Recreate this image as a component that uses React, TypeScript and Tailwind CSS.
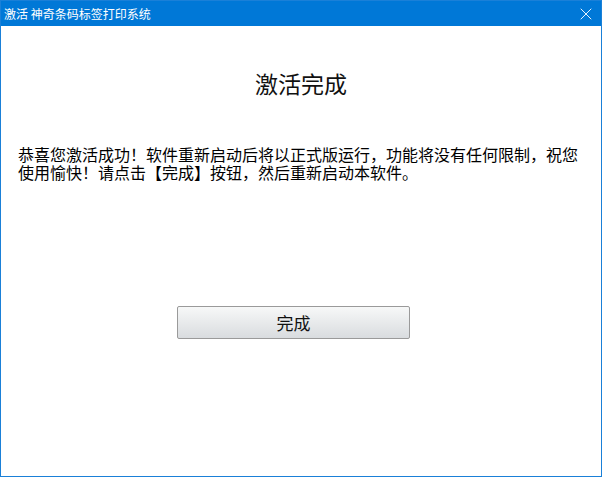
import { X } from "lucide-react";

export default function App() {
  return (
    <div
      className="w-[602px] h-[477px] bg-white border border-[#1a80d8] flex flex-col text-black"
      style={{ fontFamily: '"Noto Sans CJK SC", "Noto Sans", sans-serif' }}
    >
      <div className="h-[25px] bg-[#0078d7] flex items-center justify-between pl-[3px] pr-[5px]">
        <span className="text-white text-[12px] leading-none">激活 神奇条码标签打印系统</span>
        <X className="w-[20px] h-[20px] text-white" strokeWidth={1.1} />
      </div>

      <h1 className="mt-[42px] h-[30px] text-center text-[23px] leading-[30px] font-normal text-[#111]">
        激活完成
      </h1>

      <p className="mt-[47px] px-[17px] text-[16px] leading-[18px]">
        恭喜您激活成功！软件重新启动后将以正式版运行，功能将没有任何限制，祝您使用愉快！请点击【完成】按钮，然后重新启动本软件。
      </p>

      <button className="mt-[125px] ml-[176px] w-[233px] h-[33px] border border-[#9a9a9a] rounded-[2px] bg-gradient-to-b from-[#f7f8f8] to-[#d9dcdf] text-[17px] text-[#111]">
        完成
      </button>
    </div>
  );
}
